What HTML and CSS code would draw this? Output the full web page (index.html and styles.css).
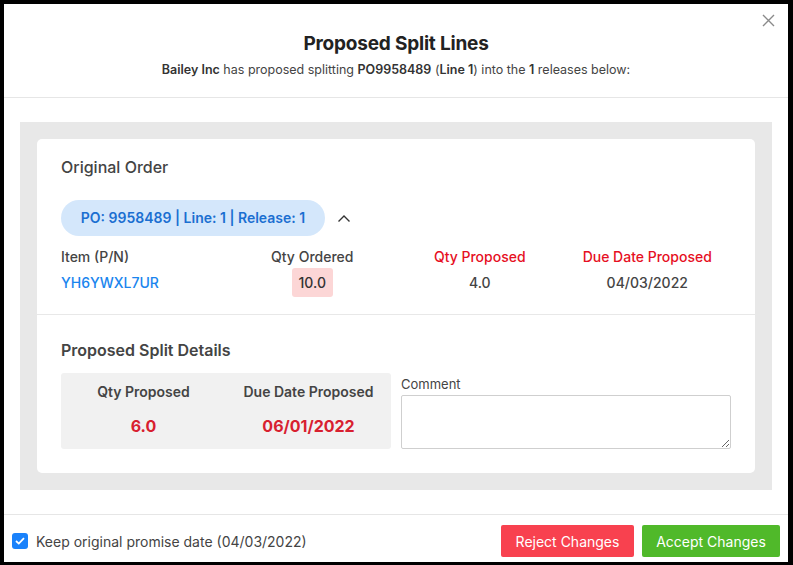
FILE: index.html
```html
<!DOCTYPE html>
<html lang="en">
<head>
    <meta charset="UTF-8">
    <meta name="viewport" content="width=device-width, initial-scale=1.0">
    <link rel="stylesheet" href="styles.css">
    <title>Proposed Split Lines</title>
</head>
<body>
    <div class="modal">
        <div class="modal-header">
            <button class="close-btn" aria-label="Close">
                <svg width="13" height="13" viewBox="0 0 13 13"><path d="M1 1 L12 12 M12 1 L1 12" stroke="#8a8a8a" stroke-width="1.4" fill="none"/></svg>
            </button>
            <h1>Proposed Split Lines</h1>
            <p class="subtitle"><strong>Bailey Inc</strong> has proposed splitting <strong>PO9958489</strong> (<strong>Line 1</strong>) into the <strong>1</strong> releases below:</p>
        </div>

        <div class="modal-body">
            <div class="releases">
                <div class="card">
                    <div class="card-section original">
                        <h2>Original Order</h2>
                        <div class="pill-row">
                            <span class="pill">PO: 9958489 | Line: 1 | Release: 1</span>
                            <svg class="chevron" width="14" height="9" viewBox="0 0 14 9"><path d="M1.5 7.5 L7 2 L12.5 7.5" stroke="#333" stroke-width="1.4" fill="none"/></svg>
                        </div>
                        <div class="order-grid">
                            <div class="cell first label">Item (P/N)</div>
                            <div class="cell label">Qty Ordered</div>
                            <div class="cell label red">Qty Proposed</div>
                            <div class="cell label red">Due Date Proposed</div>

                            <div class="cell first value"><a href="#" class="item-link">YH6YWXL7UR</a></div>
                            <div class="cell value"><span class="highlight">10.0</span></div>
                            <div class="cell value">4.0</div>
                            <div class="cell value">04/03/2022</div>
                        </div>
                    </div>

                    <div class="card-section split">
                        <h2 class="bold">Proposed Split Details</h2>
                        <div class="split-row">
                            <div class="split-box">
                                <div class="split-col">
                                    <div class="split-label">Qty Proposed</div>
                                    <div class="split-value">6.0</div>
                                </div>
                                <div class="split-col">
                                    <div class="split-label">Due Date Proposed</div>
                                    <div class="split-value">06/01/2022</div>
                                </div>
                            </div>
                            <div class="comment">
                                <label for="comment">Comment</label>
                                <textarea id="comment"></textarea>
                            </div>
                        </div>
                    </div>
                </div>
            </div>
        </div>

        <div class="modal-footer">
            <label class="keep-date">
                <span class="checkbox">
                    <svg width="10" height="8" viewBox="0 0 10 8"><path d="M1 4 L3.8 6.6 L9 1.2" stroke="#fff" stroke-width="1.8" fill="none"/></svg>
                </span>
                Keep original promise date (04/03/2022)
            </label>
            <div class="actions">
                <button class="btn reject">Reject Changes</button>
                <button class="btn accept">Accept Changes</button>
            </div>
        </div>
    </div>
</body>
</html>
```

FILE: styles.css
```css
        html, body {
            height: 100%;
        }

        body {
            margin: 0;
            background: #000;
            padding: 4px 5px 3px 4px;
            box-sizing: border-box;
            font-family: 'Inter', 'Roboto', sans-serif;
            color: #444;
        }

        .modal {
            background: #fff;
            height: 100%;
            display: flex;
            flex-direction: column;
        }

        .modal-header {
            position: relative;
            text-align: center;
            padding: 28px 0 0;
            height: 65px;
            border-bottom: 1px solid #e6e6e6;
        }

        .close-btn {
            position: absolute;
            top: 10px;
            right: 13px;
            background: none;
            border: none;
            padding: 0;
            cursor: pointer;
        }

        h1 {
            margin: 0;
            font-size: 19px;
            line-height: 24px;
            font-weight: 700;
            color: #222;
            letter-spacing: -0.2px;
        }

        .subtitle {
            margin: 5px 0 0;
            font-size: 12.5px;
            line-height: 18px;
            color: #444;
        }

        .subtitle strong {
            font-weight: 600;
            color: #333;
        }

        .modal-body {
            padding: 24px 16px 24px 16px;
            border-bottom: 1px solid #e6e6e6;
        }

        .releases {
            background: #e8e8e8;
            padding: 17px;
        }

        .card {
            background: #fff;
            border-radius: 5px;
        }

        .card-section {
            padding: 0 24px;
        }

        .card-section.original {
            padding-top: 18px;
            padding-bottom: 17px;
            border-bottom: 1px solid #e8e8e8;
        }

        .card-section.split {
            padding-top: 25px;
            padding-bottom: 24px;
        }

        h2 {
            margin: 0;
            font-size: 16px;
            line-height: 20px;
            font-weight: 500;
            color: #444;
        }

        h2.bold {
            font-weight: 600;
        }

        .pill-row {
            display: flex;
            align-items: center;
            gap: 12px;
            margin-top: 23px;
        }

        .pill {
            display: inline-block;
            background: #d4e7fb;
            color: #1b6fd1;
            font-weight: 600;
            font-size: 14px;
            line-height: 36px;
            padding: 0 18px;
            border-radius: 18px;
            width: 228px;
            text-align: center;
        }

        .order-grid {
            display: grid;
            grid-template-columns: repeat(4, 1fr);
            margin-top: 11px;
        }

        .cell {
            text-align: center;
            font-size: 14px;
        }

        .cell.first {
            text-align: left;
        }

        .label {
            line-height: 20px;
            color: #444;
            font-weight: 500;
        }

        .label.red {
            color: #e60f23;
        }

        .value {
            height: 29px;
            line-height: 29px;
            margin-top: 1px;
            color: #444;
            font-weight: 500;
        }

        .item-link {
            color: #1a85ee;
            text-decoration: none;
            font-weight: 500;
        }

        .highlight {
            display: inline-block;
            background: #fcd6d6;
            padding: 0 7px;
            border-radius: 3px;
            color: #333;
        }

        .split-row {
            display: flex;
            gap: 10px;
            margin-top: 13px;
        }

        .split-box {
            flex: 1;
            display: flex;
            background: #f1f1f1;
            border-radius: 3px;
            height: 76px;
        }

        .split-col {
            flex: 1;
            text-align: center;
            padding-top: 9px;
        }

        .split-label {
            font-size: 14px;
            line-height: 20px;
            font-weight: 600;
            color: #444;
        }

        .split-value {
            margin-top: 13px;
            font-size: 16px;
            line-height: 22px;
            font-weight: 700;
            color: #d8202f;
        }

        .comment {
            flex: 1;
            display: flex;
            flex-direction: column;
        }

        .comment label {
            font-size: 13px;
            line-height: 18px;
            color: #444;
            margin-top: 2px;
        }

        .comment textarea {
            margin-top: 2px;
            height: 54px;
            box-sizing: border-box;
            border: 1px solid #cfcfcf;
            border-radius: 2px;
            resize: vertical;
        }

        .modal-footer {
            flex: 1;
            display: flex;
            justify-content: space-between;
            align-items: center;
            padding: 5px 8px 0 8px;
        }

        .keep-date {
            display: flex;
            align-items: center;
            gap: 8px;
            font-size: 14px;
            color: #444;
        }

        .checkbox {
            width: 16px;
            height: 16px;
            background: #1a82fb;
            border-radius: 3px;
            display: flex;
            align-items: center;
            justify-content: center;
        }

        .actions {
            display: flex;
            gap: 8px;
        }

        .btn {
            border: none;
            color: #fff;
            font-family: inherit;
            font-size: 14px;
            height: 32px;
            padding: 0;
            white-space: nowrap;
            border-radius: 2px;
            cursor: pointer;
        }

        .btn.reject {
            background: #f8414f;
            width: 133px;
        }

        .btn.accept {
            background: #50b92a;
            width: 138px;
        }
```
